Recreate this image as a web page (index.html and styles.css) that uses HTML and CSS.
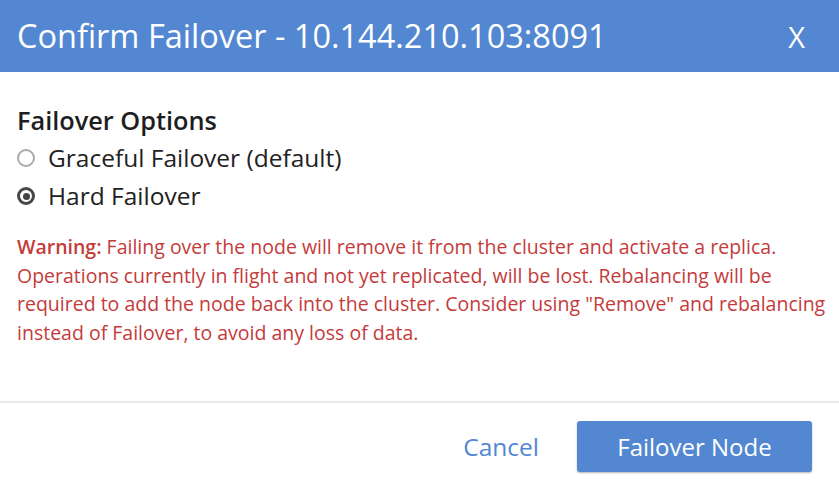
FILE: index.html
```html
<!DOCTYPE html>
<html lang="en">
<head>
    <meta charset="UTF-8">
    <title>Confirm Failover</title>
    <link rel="stylesheet" href="styles.css">
</head>
<body>
    <div class="dialog">
        <div class="dialog-header">
            <h2>Confirm Failover - 10.144.210.103:8091</h2>
            <span class="close">X</span>
        </div>

        <div class="dialog-body">
            <h4>Failover Options</h4>
            <label class="option">
                <span class="radio"></span>
                Graceful Failover (default)
            </label>
            <label class="option">
                <span class="radio checked"></span>
                Hard Failover
            </label>

            <p class="warning">
                <strong>Warning:</strong> Failing over the node will remove it from the cluster and activate a replica.
                Operations currently in flight and not yet replicated, will be lost. Rebalancing will be
                required to add the node back into the cluster. Consider using "Remove" and rebalancing
                instead of Failover, to avoid any loss of data.
            </p>
        </div>

        <div class="dialog-footer">
            <a class="cancel">Cancel</a>
            <button class="primary">Failover Node</button>
        </div>
    </div>
</body>
</html>
```

FILE: styles.css
```css
body {
    margin: 0;
    background: white;
    font-family: "Open Sans", sans-serif;
}
.dialog {
    width: 839px;
    height: 490px;
    display: flex;
    flex-direction: column;
}
.dialog-header {
    height: 72px;
    flex-shrink: 0;
    background-color: #5387d1;
    color: white;
    display: flex;
    align-items: center;
    justify-content: space-between;
    padding: 0 34px 0 17px;
}
.dialog-header h2 {
    margin: 0;
    font-size: 32.5px;
    font-weight: 400;
    line-height: 1;
}
.close {
    font-size: 29px;
    line-height: 1;
}
.dialog-body {
    height: 331px;
    box-sizing: border-box;
    padding: 31px 8px 0 17px;
    border-bottom: 2px solid #e8e8e8;
}
h4 {
    margin: 0 0 2px;
    font-size: 25.3px;
    font-weight: 600;
    color: #1e1e1e;
    line-height: 34px;
}
.option {
    display: flex;
    align-items: center;
    gap: 13px;
    font-size: 24.5px;
    color: #222;
    line-height: 38px;
}
.radio {
    width: 18px;
    height: 18px;
    border: 2px solid #aaa;
    border-radius: 50%;
    box-sizing: border-box;
    display: flex;
    align-items: center;
    justify-content: center;
}
.radio.checked {
    border: 3px solid #484848;
}
.radio.checked::after {
    content: "";
    width: 7px;
    height: 7px;
    border-radius: 50%;
    background: #444;
}
.warning {
    margin: 18px 0 0;
    color: #c43b3b;
    font-size: 19.5px;
    line-height: 28.7px;
}
.warning strong {
    font-weight: 600;
}
.dialog-footer {
    flex: 1;
    display: flex;
    align-items: center;
    justify-content: flex-end;
    gap: 38px;
    padding: 0 27px 0 0;
}
.cancel {
    color: #5387d1;
    font-size: 24.5px;
}
.primary {
    width: 235px;
    height: 51px;
    background-color: #5387d1;
    color: white;
    border: none;
    border-radius: 3px;
    font-family: "Open Sans", sans-serif;
    font-size: 24px;
    box-shadow: 0 1px 2px rgba(0,0,0,0.3);
}
```
